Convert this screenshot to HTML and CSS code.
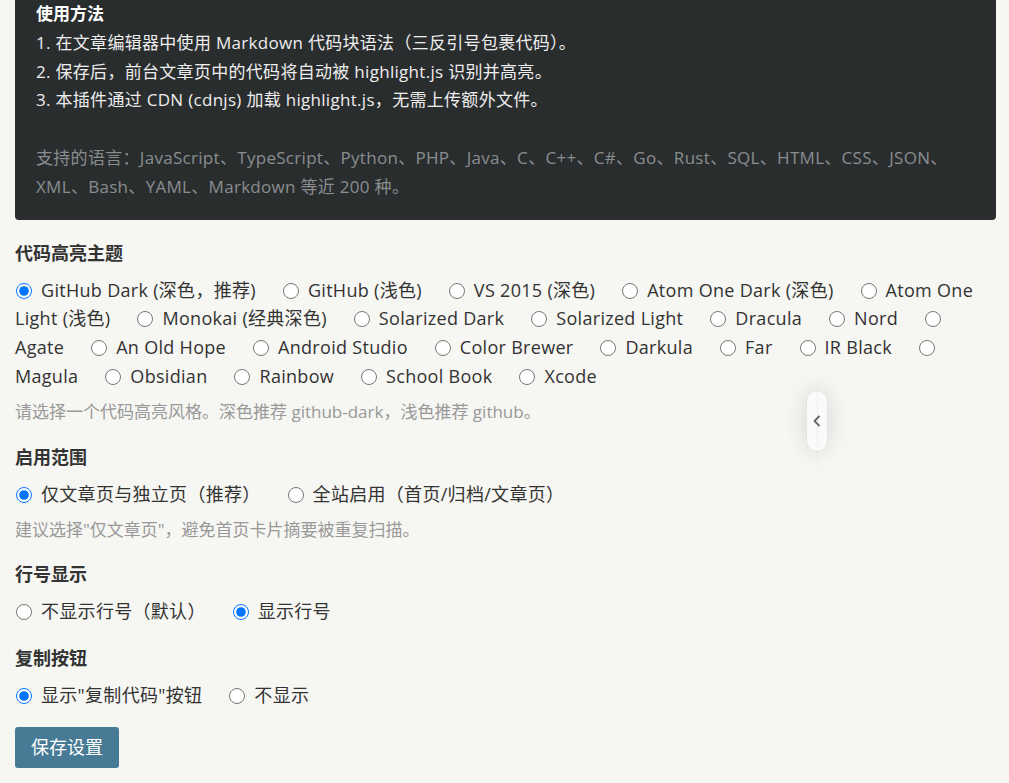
FILE: index.html
```html
<!DOCTYPE html>
<html lang="zh-CN">

<head>
  <meta charset="UTF-8">
  <meta name="viewport" content="width=device-width, initial-scale=1.0">
  <title>代码高亮设置</title>
  <link rel="stylesheet" href="styles.css">
</head>

<body>
  <div class="wrap">
    <div class="usage">
      <h3>使用方法</h3>
      <p>1. 在文章编辑器中使用 Markdown 代码块语法（三反引号包裹代码）。</p>
      <p>2. 保存后，前台文章页中的代码将自动被 highlight.js 识别并高亮。</p>
      <p>3. 本插件通过 CDN (cdnjs) 加载 highlight.js，无需上传额外文件。</p>
      <p class="langs">支持的语言：JavaScript、TypeScript、Python、PHP、Java、C、C++、C#、Go、Rust、SQL、HTML、CSS、JSON、XML、Bash、YAML、Markdown 等近 200 种。</p>
    </div>

    <form class="settings">
      <div class="field">
        <div class="field-title">代码高亮主题</div>
        <div class="options">
          <label><input type="radio" name="theme" checked>GitHub Dark (深色，推荐)</label>
          <label><input type="radio" name="theme">GitHub (浅色)</label>
          <label><input type="radio" name="theme">VS 2015 (深色)</label>
          <label><input type="radio" name="theme">Atom One Dark (深色)</label>
          <label><input type="radio" name="theme">Atom One Light (浅色)</label>
          <label><input type="radio" name="theme">Monokai (经典深色)</label>
          <label><input type="radio" name="theme">Solarized Dark</label>
          <label><input type="radio" name="theme">Solarized Light</label>
          <label><input type="radio" name="theme">Dracula</label>
          <label><input type="radio" name="theme">Nord</label>
          <label><input type="radio" name="theme">Agate</label>
          <label><input type="radio" name="theme">An Old Hope</label>
          <label><input type="radio" name="theme">Android Studio</label>
          <label><input type="radio" name="theme">Color Brewer</label>
          <label><input type="radio" name="theme">Darkula</label>
          <label><input type="radio" name="theme">Far</label>
          <label><input type="radio" name="theme">IR Black</label>
          <label><input type="radio" name="theme">Magula</label>
          <label><input type="radio" name="theme">Obsidian</label>
          <label><input type="radio" name="theme">Rainbow</label>
          <label><input type="radio" name="theme">School Book</label>
          <label><input type="radio" name="theme">Xcode</label>
        </div>
        <div class="hint">请选择一个代码高亮风格。深色推荐 github-dark，浅色推荐 github。</div>
      </div>

      <div class="field tight">
        <div class="field-title">启用范围</div>
        <div class="options">
          <label><input type="radio" name="scope" checked>仅文章页与独立页（推荐）</label>
          <label><input type="radio" name="scope">全站启用（首页/归档/文章页）</label>
        </div>
        <div class="hint">建议选择"仅文章页"，避免首页卡片摘要被重复扫描。</div>
      </div>

      <div class="field">
        <div class="field-title">行号显示</div>
        <div class="options">
          <label><input type="radio" name="lines">不显示行号（默认）</label>
          <label><input type="radio" name="lines" checked>显示行号</label>
        </div>
      </div>

      <div class="field last">
        <div class="field-title">复制按钮</div>
        <div class="options">
          <label><input type="radio" name="copy" checked>显示"复制代码"按钮</label>
          <label><input type="radio" name="copy">不显示</label>
        </div>
      </div>

      <button type="button" class="save">保存设置</button>
    </form>
  </div>

  <div class="side-toggle">
    <svg width="10" height="12" viewBox="0 0 10 12">
      <polyline points="7,1.5 2.5,6 7,10.5" fill="none" stroke="#666" stroke-width="1.8" stroke-linecap="round" stroke-linejoin="round"/>
    </svg>
  </div>
</body>

</html>
```

FILE: styles.css
```css
* {
  margin: 0;
  padding: 0;
  box-sizing: border-box;
}

html,
body {
  background-color: #f6f6f2;
  font-family: "Open Sans", "Noto Sans CJK SC", sans-serif;
  color: #333;
}

.wrap {
  padding: 0 13px 0 15px;
}

.usage {
  background-color: #2a2d2e;
  color: #eee;
  font-size: 17px;
  line-height: 28.8px;
  letter-spacing: .3px;
  padding: 0 21px 18px;
  border-radius: 0 0 4px 4px;
  margin-bottom: 20px;
}

.usage h3 {
  font-size: 17px;
  color: #fff;
  letter-spacing: 0;
}

.usage .langs {
  margin-top: 28.8px;
  color: #898d90;
}

.field {
  margin-bottom: 20px;
}

.field.tight {
  margin-bottom: 19px;
}

.field.last {
  margin-bottom: 17px;
}

.field-title {
  font-size: 18px;
  font-weight: bold;
  line-height: 26px;
  margin-bottom: 10px;
}

.options {
  font-size: 18px;
  line-height: 28.8px;
  letter-spacing: .3px;
}

.options label {
  margin-right: 21px;
  cursor: pointer;
}

.options input {
  width: 16px;
  height: 16px;
  margin: 0 9px 0 1px;
  vertical-align: -2px;
}

.hint {
  margin-top: 9px;
  font-size: 17px;
  line-height: 24px;
  color: #999;
}

.save {
  background-color: #477a95;
  color: #fff;
  border: none;
  border-radius: 3px;
  font-family: inherit;
  font-size: 18px;
  line-height: 25px;
  padding: 8px 16px;
  height: 41px;
  cursor: pointer;
}

.side-toggle {
  position: fixed;
  left: 806px;
  top: 390px;
  width: 22px;
  height: 62px;
  background-color: #fafafa;
  border: 1px solid #e3e3e3;
  border-radius: 11px;
  box-shadow: 0 0 22px rgba(0, 0, 0, .13);
  display: flex;
  align-items: center;
  justify-content: center;
}

.side-toggle::before {
  content: "";
  position: absolute;
  left: 10px;
  top: -25px;
  width: 1px;
  height: 112px;
  background: linear-gradient(rgba(0, 0, 0, 0), rgba(0, 0, 0, .06), rgba(0, 0, 0, 0));
  z-index: -1;
}
```
